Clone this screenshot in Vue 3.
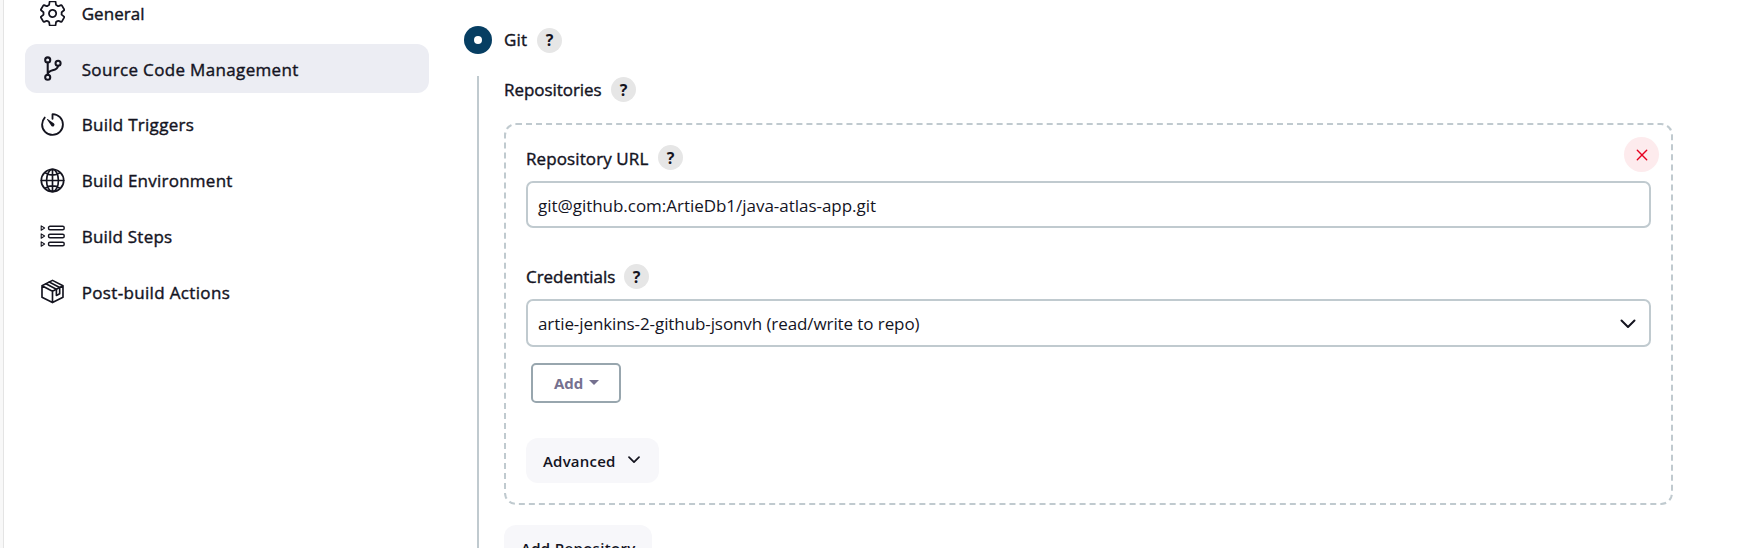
<script setup>
const items = [
  { label: 'General', icon: 'gear', cls: 't-general' },
  { label: 'Source Code Management', icon: 'branch', active: true, cls: 't-scm' },
  { label: 'Build Triggers', icon: 'timer', cls: 't-triggers' },
  { label: 'Build Environment', icon: 'globe', cls: 't-env' },
  { label: 'Build Steps', icon: 'steps', cls: 't-steps' },
  { label: 'Post-build Actions', icon: 'box', cls: 't-post' },
]
</script>

<template>
  <div class="page">
    <div class="edge"></div>
    <nav class="sidebar">
      <a v-for="item in items" :key="item.label" class="nav-item" :class="{ active: item.active }">
        <svg class="nav-icon" viewBox="0 0 512 512" fill="none" stroke="currentColor" stroke-width="34" stroke-linecap="round" stroke-linejoin="round">
          <template v-if="item.icon === 'gear'">
            <path transform="translate(-38 -40) scale(1.155)" stroke-width="31" d="M262.29 192.31a64 64 0 1057.4 57.4 64.13 64.13 0 00-57.4-57.4zM416.39 256a154.34 154.34 0 01-1.53 20.79l45.21 35.46a10.81 10.81 0 012.45 13.75l-42.77 74a10.81 10.81 0 01-13.14 4.59l-44.9-18.08a16.11 16.11 0 00-15.17 1.75A164.48 164.48 0 01325 400.8a15.94 15.94 0 00-8.82 12.14l-6.73 47.89a11.08 11.08 0 01-10.68 9.17h-85.54a11.11 11.11 0 01-10.69-8.87l-6.72-47.82a16.07 16.07 0 00-9-12.22 155.3 155.3 0 01-21.46-12.57 16 16 0 00-15.11-1.71l-44.89 18.07a10.81 10.81 0 01-13.14-4.58l-42.77-74a10.8 10.8 0 012.45-13.75l38.21-30a16.05 16.05 0 006-14.08c-.36-4.17-.58-8.33-.58-12.5s.21-8.27.58-12.35a16 16 0 00-6.07-13.94l-38.19-30A10.81 10.81 0 0149.48 186l42.77-74a10.81 10.81 0 0113.14-4.59l44.9 18.08a16.11 16.11 0 0015.17-1.75A164.48 164.48 0 01187 111.2a15.94 15.94 0 008.82-12.14l6.73-47.89A11.08 11.08 0 01213.23 42h85.54a11.11 11.11 0 0110.69 8.87l6.72 47.82a16.07 16.07 0 009 12.22 155.3 155.3 0 0121.46 12.57 16 16 0 0015.11 1.71l44.89-18.07a10.81 10.81 0 0113.14 4.58l42.77 74a10.8 10.8 0 01-2.45 13.75l-38.21 30a16.05 16.05 0 00-6.05 14.08c.33 4.14.55 8.3.55 12.47z" />
          </template>
          <template v-else-if="item.icon === 'branch'">
            <g stroke-width="42">
              <circle cx="158" cy="80" r="52" /><circle cx="158" cy="434" r="52" /><circle cx="370" cy="148" r="52" />
              <path d="M158 132v250M370 200c-8 62-52 78-112 94s-100 36-100 88" />
            </g>
          </template>
          <template v-else-if="item.icon === 'timer'">
            <path d="M112.91 128A191.85 191.85 0 0064 254c-1.18 106.35 85.65 193.8 192 194 106.2.2 192-85.83 192-192 0-104.54-83.55-189.61-187.5-192a4.36 4.36 0 00-4.5 4.37V152" transform="translate(-28 -28) scale(1.11)" />
            <path fill="currentColor" stroke="none" d="M233.38 278.63l-79-113a8.13 8.13 0 0111.32-11.32l113 79a32.5 32.5 0 01-37.25 53.26 33.21 33.21 0 01-8.07-7.94z" transform="translate(-28 -28) scale(1.11)" />
          </template>
          <template v-else-if="item.icon === 'globe'">
            <circle cx="256" cy="256" r="230" />
            <path d="M256 26c-64 0-122 102-122 230s58 230 122 230 122-102 122-230S320 26 256 26zM256 26v460M486 256H26M106 100c42 30 93 47 150 47s108-17 150-47M106 412c42-30 93-47 150-47s108 17 150 47" />
          </template>
          <template v-else-if="item.icon === 'steps'">
            <g transform="scale(20.48)" stroke-width="1.400">
              <rect x="8.500" y="2.300" width="15.700" height="3.500" rx="1.500" /><rect x="8.500" y="10.300" width="15.700" height="3.500" rx="1.500" /><rect x="8.500" y="18.300" width="15.700" height="3.500" rx="1.500" />
              <path stroke-width="1.100" d="M1.200 1.900v4.300l3.400-2.150zM1.200 9.900v4.300l3.400-2.150zM1.200 17.900v4.300l3.400-2.150z" />
            </g>
          </template>
          <template v-else>
            <g transform="translate(10 10) scale(20.48)" stroke-width="1.650">
              <path d="M12 .9l10.500 5.400v11.400L12 23.100 1.500 17.700V6.300zM1.500 6.300L12 11.700l10.500-5.400M12 11.700v11.400" />
              <path d="M5.400 4.300l10.500 5.400v6.300l3.300-1.700V8L8.700 2.600" />
            </g>
          </template>
        </svg>
        <span :class="item.cls">{{ item.label }}</span>
      </a>
    </nav>

    <main class="main">
      <div class="radio-row">
        <span class="radio"><i></i></span>
        <span class="label t-git">Git</span>
        <span class="help">?</span>
      </div>
      <div class="nested">
        <div class="head-row">
          <span class="label t-repos">Repositories</span>
          <span class="help">?</span>
        </div>
        <section class="repo">
          <button class="close" aria-label="Delete">
            <svg viewBox="0 0 12 12" fill="none" stroke="#e6001f" stroke-width="1.4" stroke-linecap="round"><path d="M1.300 1.300l9.400 9.400M10.700 1.300l-9.400 9.400" /></svg>
          </button>
          <div class="field-head">
            <span class="label t-url">Repository URL</span>
            <span class="help">?</span>
          </div>
          <div class="control"><span class="v-url">git@github.com:ArtieDb1/java-atlas-app.git</span></div>
          <div class="field-head second">
            <span class="label t-cred">Credentials</span>
            <span class="help">?</span>
          </div>
          <div class="control select">
            <span class="v-cred">artie-jenkins-2-github-jsonvh (read/write to repo)</span>
            <svg class="chev" viewBox="0 0 16 10" fill="none" stroke="#14141f" stroke-width="2" stroke-linecap="round" stroke-linejoin="round"><path d="M1.500 1.500L8 8l6.500-6.500" /></svg>
          </div>
          <button class="add"><span>Add</span><i class="caret"></i></button>
          <button class="soft advanced">
            <span class="t-adv">Advanced</span>
            <svg class="chev-sm" viewBox="0 0 12 8" fill="none" stroke="#14141f" stroke-width="1.700" stroke-linecap="round" stroke-linejoin="round"><path d="M1 1.200l5 5 5-5" /></svg>
          </button>
        </section>
        <button class="soft add-repo"><span class="t-addrepo">Add Repository</span></button>
      </div>
    </main>
  </div>
</template>

<style>
body { margin: 0; background: #fff; overflow: hidden; }
</style>

<style scoped>
* { box-sizing: border-box; }
.page { display: flex; height: 548px; overflow: hidden; background: #fff; color: #14141f; font: 400 17px/24px "Open Sans", "Noto Sans", sans-serif; }
.page span { white-space: nowrap; }
.edge { width: 4px; flex: none; background: #f8f8f8; border-right: 1px solid #e4e4e4; }
.sidebar { width: 404px; flex: none; margin: -11.5px 0 0 21px; display: flex; flex-direction: column; gap: 6.8px; }
.nav-item { display: flex; align-items: center; height: 49px; flex: none; padding-left: 15.4px; gap: 16.3px; border-radius: 12px; }
.nav-item span, .label { -webkit-text-stroke: 0.4px currentColor; }
.nav-item span { padding-top: 1px; }
.nav-item.active { background: #ecedf3; }
.nav-icon { width: 25px; height: 25px; flex: none; }
.t-general { letter-spacing: 0.05px; }
.t-scm { letter-spacing: 0.34px; }
.nav-item .t-scm, .nav-item .t-post { padding-top: 2px; }
.t-triggers { letter-spacing: 0.28px; }
.t-env { letter-spacing: 0.24px; }
.t-steps { letter-spacing: 0.22px; }
.t-post { letter-spacing: 0.34px; }
.main { width: 1209px; flex: none; margin-left: 35px; padding-top: 26px; }
.radio-row { display: flex; align-items: center; height: 28px; }
.radio { width: 28px; height: 28px; border-radius: 50%; background: #063e62; display: flex; align-items: center; justify-content: center; margin-right: 12px; }
.radio i { width: 8px; height: 8px; border-radius: 50%; background: #fff; }
.help { width: 25px; height: 25px; flex: none; border-radius: 50%; background: #e6e6e6; display: flex; align-items: center; justify-content: center; font-size: 16px; font-weight: 700; }
.label { flex: none; }
.t-git { width: 33px; letter-spacing: 0.2px; }
.t-repos { width: 107px; letter-spacing: -0.05px; }
.t-url { width: 132px; letter-spacing: 0.1px; padding-top: 2px; }
.t-cred { width: 98px; letter-spacing: -0.04px; }
.v-url { letter-spacing: -0.03px; padding-top: 2px; }
.v-cred { letter-spacing: -0.09px; padding-top: 1px; }
.t-adv { letter-spacing: 0.2px; }
.t-addrepo { letter-spacing: 0.3px; }
.nested { margin: 22px 0 0 13px; border-left: 2px solid #c0cacf; padding-left: 25px; height: 500px; }
.head-row { display: flex; align-items: center; height: 25px; padding-top: 2px; }
.repo { position: relative; margin-top: 22px; width: 1169px; height: 382px; border: 2px dashed #c0cacf; border-radius: 12px; padding: 20px 20px 0; }
.close { position: absolute; right: 12px; top: 12px; width: 35px; height: 35px; border: 0; border-radius: 50%; background: #fdebed; padding: 0; display: flex; align-items: center; justify-content: center; }
.close svg { width: 12px; height: 12px; }
.field-head { display: flex; align-items: center; height: 25px; }
.field-head.second { margin-top: 36px; }
.control { margin-top: 11px; height: 47px; border: 2px solid #c0cacf; border-radius: 7px; display: flex; align-items: center; padding: 0 13px 0 10px; justify-content: space-between; }
.control.select { margin-top: 10px; height: 48px; }
.chev { width: 16px; height: 10px; margin-top: 1px; }
button { font: inherit; color: inherit; }
.add { margin: 16px 0 0 5px; width: 90px; height: 40px; border: 2px solid #98a6ae; border-radius: 5px; background: #fff; color: #75708f; font-weight: 700; font-size: 15px; display: flex; align-items: center; padding: 0 0 0 21px; }
.caret { margin: -2px 0 0 6px; border: 5px solid transparent; border-top-color: #75708f; border-bottom: 0; }
.soft { border: 0; border-radius: 12px; background: #f7f7fa; height: 45px; display: flex; align-items: center; font-size: 15px; font-weight: 600; padding: 0 17px; }
.advanced { margin-top: 35px; width: 133px; justify-content: space-between; padding-right: 19px; }
.chev-sm { width: 12px; height: 8px; margin-top: -1px; }
.add-repo { margin-top: 20px; width: 148px; }
</style>
